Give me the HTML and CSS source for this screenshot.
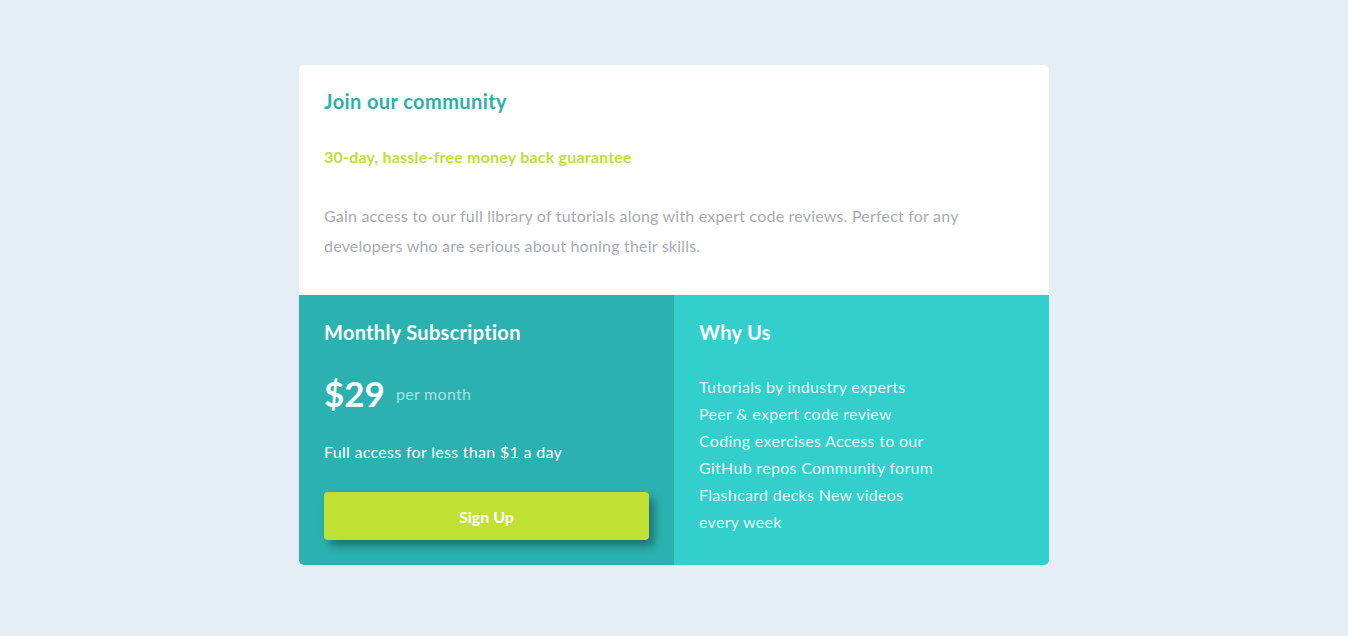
FILE: index.html
```html
<!DOCTYPE html>
<html lang="en">
<head>
<meta charset="utf-8">
<title>Single price grid</title>
<link rel="stylesheet" href="styles.css">
</head>
<body>
<main class="card">
  <section class="top">
    <h1 class="title">Join our community</h1>
    <h2 class="guarantee">30-day, hassle-free money back guarantee</h2>
    <p class="desc">Gain access to our full library of tutorials along with expert code reviews. Perfect for any developers who are serious about honing their skills.</p>
  </section>
  <div class="bottom">
    <section class="sub">
      <h2 class="heading">Monthly Subscription</h2>
      <div class="price"><span class="amount">$29</span><span class="per">per month</span></div>
      <p class="access">Full access for less than $1 a day</p>
      <button class="btn">Sign Up</button>
    </section>
    <section class="why">
      <h2 class="heading">Why Us</h2>
      <p class="list">Tutorials by industry experts<br>Peer &amp; expert code review<br>Coding exercises Access to our<br>GitHub repos Community forum<br>Flashcard decks New videos<br>every week</p>
    </section>
  </div>
</main>
</body>
</html>
```
FILE: styles.css
```css
* { box-sizing: border-box; }
html, body { margin: 0; padding: 0; }
body {
  background: #e6eef5;
  font-family: "Lato", "Liberation Sans", sans-serif;
  min-height: 636px;
  display: flex;
  justify-content: center;
  padding-top: 65px;
}
.card {
  width: 750px;
  border-radius: 5px;
  overflow: hidden;
  background: #fff;
  align-self: flex-start;
}
.top {
  height: 230px;
  padding: 24px 25px 0;
}
.title {
  margin: 0;
  font-size: 20px;
  font-weight: 700;
  letter-spacing: 0.4px;
  color: #2bb0ad;
  line-height: 24px;
}
.guarantee {
  margin: 34px 0 0;
  font-size: 16px;
  font-weight: 700;
  letter-spacing: 0.2px;
  color: #c0df34;
  line-height: 20px;
}
.desc {
  margin: 34px 0 0;
  font-size: 16px;
  letter-spacing: 0.2px;
  line-height: 30px;
  color: #a8abb3;
  max-width: 660px;
}
.bottom {
  display: flex;
  height: 270px;
}
.sub, .why {
  flex: 1;
  padding: 25px 25px 0;
  color: #fff;
}
.sub { background: #2bb2b0; }
.why { background: #32cfcc; }
.heading {
  margin: 0;
  font-size: 20px;
  font-weight: 700;
  letter-spacing: 0.3px;
  line-height: 24px;
}
.price {
  display: flex;
  align-items: center;
  margin-top: 28px;
  height: 42px;
}
.amount {
  font-size: 35px;
  font-weight: 700;
}
.per {
  margin-left: 11px;
  font-size: 16px;
  letter-spacing: 0.3px;
  color: rgba(255,255,255,0.6);
}
.access {
  margin: 28px 0 0;
  font-size: 16px;
  letter-spacing: 0.3px;
  line-height: 20px;
}
.btn {
  display: block;
  margin-top: 30px;
  width: 325px;
  height: 48px;
  border: 0;
  border-radius: 4px;
  background: #c0e133;
  color: #fff;
  font-family: inherit;
  font-size: 16px;
  font-weight: 700;
  box-shadow: 5px 6px 8px rgba(0,0,0,0.35);
}
.why .list {
  margin: 29px 0 0;
  font-size: 16px;
  letter-spacing: 0.3px;
  line-height: 27px;
  color: rgba(255,255,255,0.9);
}
```
